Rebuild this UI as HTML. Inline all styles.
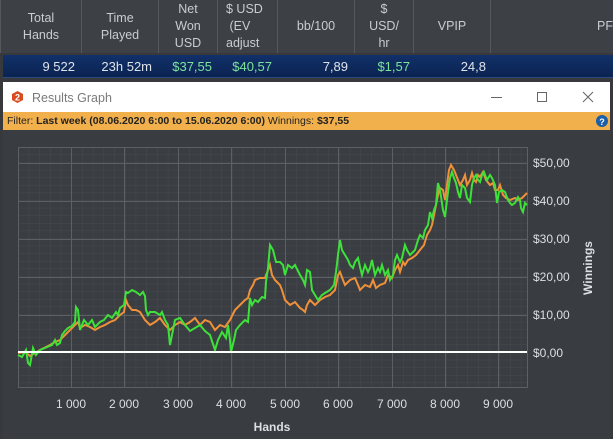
<!DOCTYPE html>
<html><head><meta charset="utf-8"><style>
*{margin:0;padding:0;box-sizing:border-box}
body{width:613px;height:439px;overflow:hidden;background:#37393d;font-family:"Liberation Sans",sans-serif;position:relative}
.hdr{position:absolute;left:0;top:0;width:613px;height:53px;background:#3d4045}
.hc{position:absolute;top:0;height:53px;display:flex;align-items:center;justify-content:center;text-align:center;color:#c9ccd0;font-size:12.5px;line-height:17px;border-right:1px solid #55585d}
.row{position:absolute;left:3px;top:55px;width:610px;height:23px;background:linear-gradient(#12316a,#0a2350);border-bottom:1px solid #2a4a80}
.dc{position:absolute;top:4px;font-size:13px;color:#dfe3ea;text-align:right}
.g{color:#7de39c}
.win{position:absolute;left:3px;top:82px;width:607px;height:357px;background:#393c40}
.tb{position:absolute;left:0;top:0;width:607px;height:30px;background:#fff}
.fb{position:absolute;left:0;top:30px;width:607px;height:18px;background:#f1b04b;font-size:10.5px;line-height:18px;padding-left:4px;color:#222}
</style></head><body>
<div class="hdr">
<div class="hc" style="left:0;width:82px;border-left:1px solid #55585d">Total<br>Hands</div>
<div class="hc" style="left:82px;width:77px">Time<br>Played</div>
<div class="hc" style="left:159px;width:59px">Net<br>Won<br>USD</div>
<div class="hc" style="left:218px;width:60px;text-align:left;justify-content:flex-start;padding-left:8px">$ USD<br>&nbsp;(EV<br>adjust</div>
<div class="hc" style="left:278px;width:77px">bb/100</div>
<div class="hc" style="left:355px;width:59px">$<br>USD/<br>hr</div>
<div class="hc" style="left:414px;width:77px">VPIP</div>
<div class="hc" style="left:491px;width:122px;justify-content:flex-end;padding-right:0;border-right:none">PF</div>
</div>
<div class="row">
<div class="dc" style="right:538px">9 522</div>
<div class="dc" style="right:461px">23h 52m</div>
<div class="dc g" style="right:401px">$37,55</div>
<div class="dc g" style="right:341px">$40,57</div>
<div class="dc" style="right:265px">7,89</div>
<div class="dc g" style="right:203px">$1,57</div>
<div class="dc" style="right:127px">24,8</div>
</div>
<div class="win">
<div class="tb">
<svg width="607" height="30" style="position:absolute;left:0;top:0">
<polygon points="14.5,9 20,12 20,18 14.5,21 9,18 9,12" fill="#d94a1e"/>
<text x="14.5" y="18.5" font-size="9" font-weight="bold" fill="#fff" text-anchor="middle" font-family="Liberation Sans">2</text>
<text x="29" y="20" font-size="12.5" fill="#7a7a7a" font-family="Liberation Sans">Results Graph</text>
<line x1="488" y1="15.5" x2="499" y2="15.5" stroke="#666"/>
<rect x="534.5" y="10.5" width="9" height="9" fill="none" stroke="#666"/>
<path d="M580 10 L590 20 M590 10 L580 20" stroke="#666"/>
</svg></div>
<div class="fb">Filter: <b>Last week (08.06.2020 6:00 to 15.06.2020 6:00)</b> Winnings: <b>$37,55</b>
<svg width="12" height="12" style="position:absolute;left:593px;top:3px"><circle cx="6" cy="6" r="6" fill="#1a5fa8"/><text x="6" y="10" font-size="9" font-weight="bold" fill="#fff" text-anchor="middle" font-family="Liberation Sans">?</text></svg></div>
</div>
<svg width="613" height="439" style="position:absolute;left:0;top:0" font-family="Liberation Sans">
<defs>
<pattern id="mi" x="18" y="147" width="10.7" height="7.6" patternUnits="userSpaceOnUse"><path d="M0 0 V7.6 M0 0 H10.7" stroke="#474a4f" stroke-width="1" fill="none"/></pattern>
</defs>
<rect x="18" y="147" width="509" height="240" fill="#3a3d41"/>
<rect x="18" y="147" width="509" height="240" fill="url(#mi)"/>
<g stroke="#5c5f64" stroke-width="1">
<path d="M71.5 147V387 M124.5 147V387 M178.5 147V387 M231.5 147V387 M285.5 147V387 M338.5 147V387 M392.5 147V387 M445.5 147V387 M498.5 147V387"/>
<path d="M18 163.5H527 M18 201.5H527 M18 239.5H527 M18 277.5H527 M18 315.5H527"/>
<rect x="18.5" y="147.5" width="509" height="240" fill="none"/>
</g>
<polyline fill="none" stroke="#f0913a" stroke-width="2" points="18,353 25,352 30,356 40,350 50,345 55,342 60,340 65,335 70,330 75,325 78,322 80,328 85,325 90,327 95,330 100,327 105,325 110,322 115,320 120,315 124,312 126,300 128,305 132,310 136,310 140,312 145,320 150,325 155,322 160,318 165,325 170,330 175,325 180,322 185,325 190,322 195,318 200,325 205,320 210,322 215,330 220,325 225,327 230,320 235,310 240,305 245,300 248,298 250,290 253,285 255,280 260,278 265,278 270,265 272,275 275,280 280,285 282,290 285,300 290,305 295,302 300,308 303,310 305,312 307,305 310,300 315,305 320,300 325,297 330,295 335,290 338,275 340,272 343,280 345,285 350,280 355,278 358,285 360,290 365,285 370,287 373,280 376,288 380,285 385,283 388,275 392,278 395,270 398,265 400,272 403,262 405,265 408,260 412,258 416,255 420,250 424,245 427,235 430,230 432,225 435,210 438,195 440,188 443,190 445,200 447,185 449,170 451,165 454,170 456,175 458,180 460,185 463,180 465,175 467,185 470,180 472,173 474,180 476,182 478,175 480,177 483,172 486,180 490,185 493,183 495,190 498,190 500,185 503,195 506,198 510,200 515,198 518,200 522,198 525,195 527,193"/>
<polyline fill="none" stroke="#3ee03a" stroke-width="2" points="18,355 22,357 26,350 28,363 30,365 33,348 36,355 40,350 45,348 52,345 55,340 57,345 60,343 62,335 65,331 68,328 72,326 75,322 76,307 78,310 80,330 84,320 88,325 92,320 95,327 100,322 104,320 108,315 112,318 116,312 118,315 120,308 124,305 126,292 128,293 132,290 136,292 140,295 143,292 145,296 146,310 148,315 150,312 155,312 160,315 162,312 165,320 168,325 170,345 172,335 175,320 180,318 185,325 190,331 195,328 200,325 205,331 210,335 215,350 218,340 222,332 226,338 228,325 230,340 231,352 234,340 236,330 240,325 245,320 248,322 250,298 252,305 255,300 258,302 262,297 265,298 266,282 268,268 270,245 273,250 276,262 280,262 283,265 285,275 288,265 292,268 295,265 300,275 303,280 305,285 307,270 310,272 312,290 315,295 318,300 322,295 325,293 330,290 334,285 336,272 338,255 340,240 342,250 345,255 348,260 350,265 353,268 355,262 358,258 360,267 362,275 365,265 368,272 370,268 372,260 375,275 378,268 380,272 382,265 385,275 388,270 390,280 393,275 395,260 397,255 400,262 402,258 405,245 407,250 410,255 413,252 415,250 418,240 420,235 423,238 425,230 428,225 430,212 432,218 434,210 436,205 438,183 440,190 443,210 445,217 447,200 449,185 450,178 452,172 454,178 456,183 458,192 460,198 462,185 465,188 467,198 470,202 472,185 474,178 476,175 478,180 480,182 482,175 484,172 487,180 490,175 492,178 495,185 497,203 499,192 502,190 505,192 508,200 510,203 512,205 515,203 518,197 520,200 521,208 523,212 525,203 527,205"/>
<line x1="18" y1="352" x2="527" y2="352" stroke="#fff" stroke-width="2"/>
<g fill="#dcdfe3" font-size="12">
<text x="533" y="167">$50,00</text><text x="533" y="205">$40,00</text><text x="533" y="243">$30,00</text><text x="533" y="281">$20,00</text><text x="533" y="319">$10,00</text><text x="533" y="357">$0,00</text>
<g text-anchor="middle"><text x="71" y="408">1 000</text><text x="124" y="408">2 000</text><text x="178" y="408">3 000</text><text x="231" y="408">4 000</text><text x="285" y="408">5 000</text><text x="338" y="408">6 000</text><text x="392" y="408">7 000</text><text x="445" y="408">8 000</text><text x="498" y="408">9 000</text></g>
<text x="272" y="431" text-anchor="middle" font-weight="bold">Hands</text>
<text transform="translate(592,268) rotate(-90)" text-anchor="middle" font-weight="bold">Winnings</text>
</g>
</svg>
</body></html>
